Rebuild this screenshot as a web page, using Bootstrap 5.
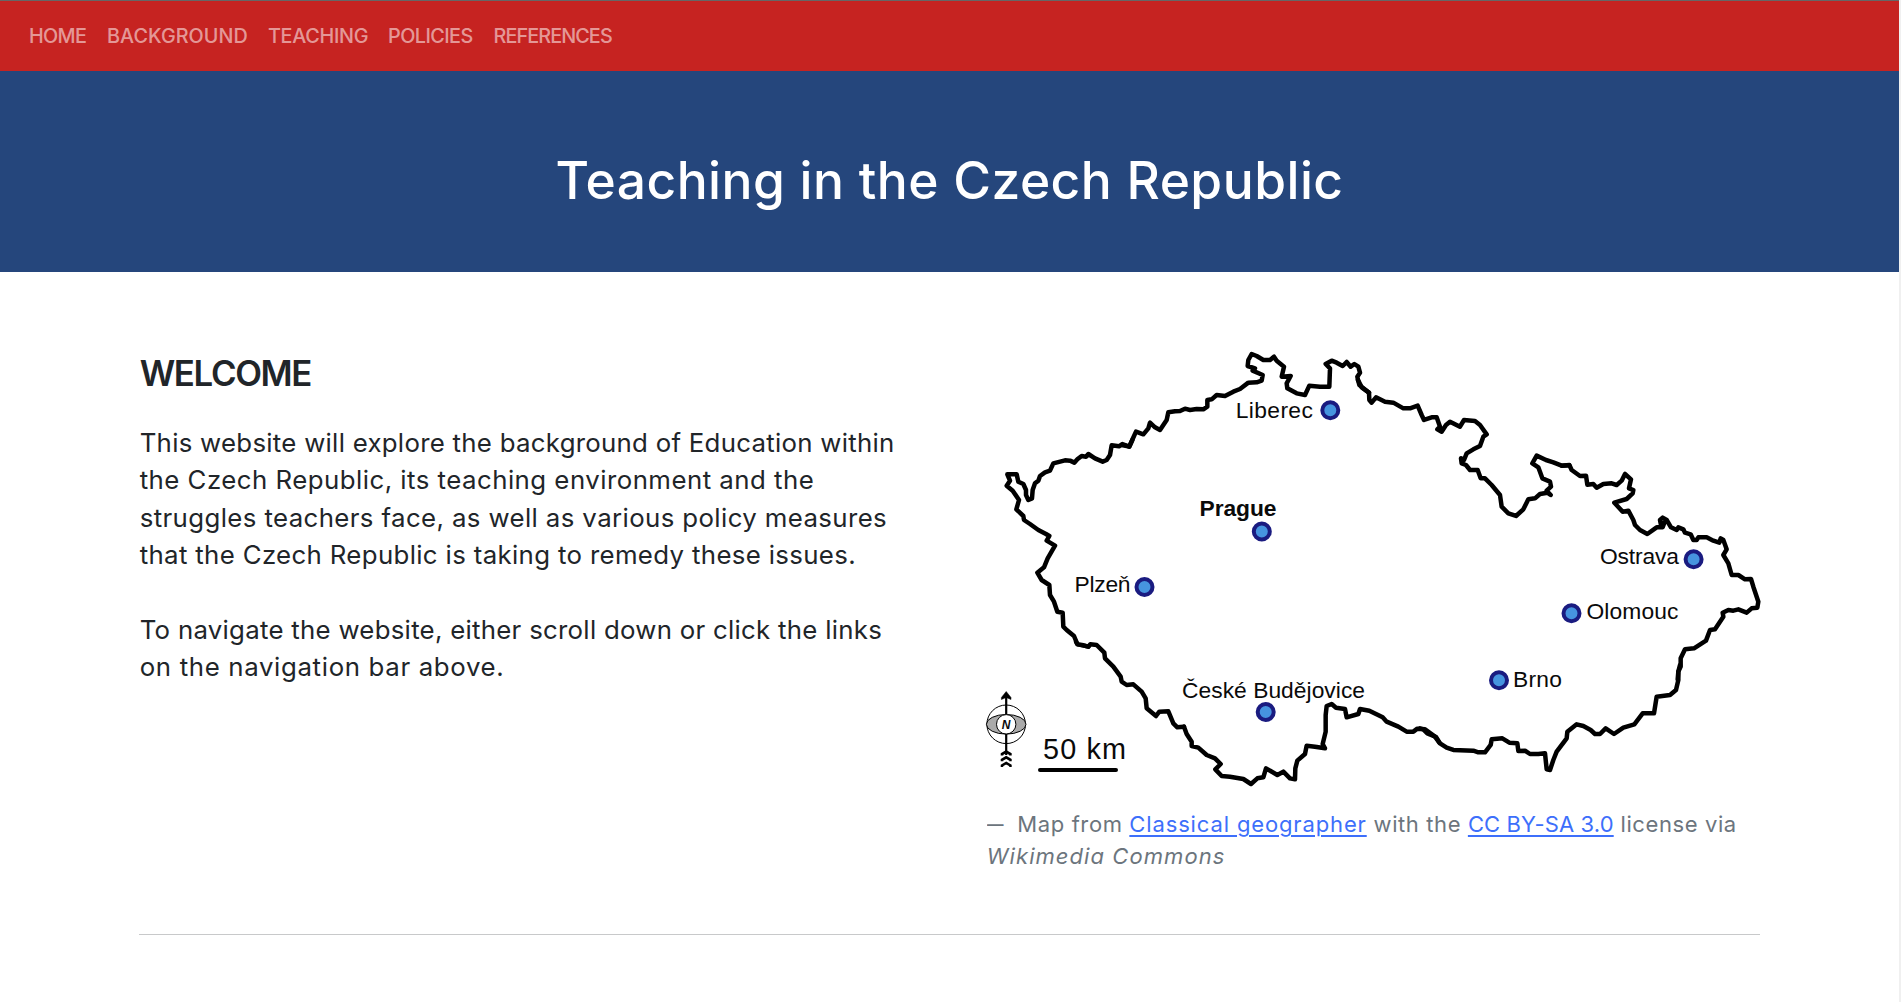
<!DOCTYPE html>
<html lang="en">
<head>
<meta charset="utf-8">
<meta name="viewport" content="width=device-width, initial-scale=1">
<title>Teaching in the Czech Republic</title>
<link href="https://cdn.jsdelivr.net/npm/bootstrap@5.3.0/dist/css/bootstrap.min.css" rel="stylesheet">
<style>
  body { font-family: Inter, "Open Sans", sans-serif; color: #212529; background: #fff; border-right: 2px solid #f0f0f0; height: 1002px; overflow: hidden; }
  .site-nav { background: #c62321; border-top: 1px solid #666; height: 71px; padding: 0 0 0 29px; align-items: center; }
  .site-nav .nav-link { font-size: 19.8px; line-height: 30px; font-weight: 500; color: rgba(255,255,255,.55); padding: 0; white-space: nowrap; }
  .w-home { width: 78px; letter-spacing: -.65px; }
  .w-back { width: 161px; letter-spacing: .05px; }
  .w-teach { width: 120px; letter-spacing: -.3px; }
  .w-pol { width: 105.5px; letter-spacing: -.55px; }
  .w-ref { letter-spacing: -.9px; }
  .hero { background: #25467c; height: 201px; padding-top: 79px; }
  .hero h1 { font-size: 51.5px; line-height: 60px; font-weight: 500; letter-spacing: .48px; color: #fff; }
  .page { margin: 0 139px; border-bottom: 1px solid #c8c9ca; height: 663px; padding-top: 73px; gap: 74px; }
  .page > div { flex: 1 1 0; min-width: 0; }
  .intro { padding: 7px 0 0 .7px; }
  .intro h2 { font-size: 34.8px; line-height: 43px; font-weight: 600; letter-spacing: -1.35px; margin-bottom: 29px; }
  .intro p { font-size: 25.8px; line-height: 37.4px; margin-bottom: 37.4px; white-space: nowrap; }
  .intro p span { display: block; }
  .s1 { letter-spacing: .28px; } .s2 { letter-spacing: .48px; } .s3 { letter-spacing: .39px; }
  .s4 { letter-spacing: .35px; } .s5 { letter-spacing: .28px; } .s6 { letter-spacing: .66px; }
  .map-art { display: block; width: 774px; height: 445px; overflow: visible; }
  .map-art text { font-family: "Liberation Sans", Arial, sans-serif; font-size: 22.8px; fill: #0a0a0a; }
  .blockquote-footer { font-size: 22px; line-height: 32px; margin: 18px 0 0; color: #6c757d; letter-spacing: .6px; white-space: nowrap; }
  .blockquote-footer::before { content: "–"; display: inline-block; width: 30.5px; transform: scaleX(1.5); transform-origin: 0 0; }
  .blockquote-footer a { color: #3d6ffb; text-decoration-thickness: 2px; text-underline-offset: 3px; }
  .c1 { letter-spacing: .86px; } .c2 { letter-spacing: .13px; } .c3 { letter-spacing: 1.06px; }
</style>
<script src="https://cdn.jsdelivr.net/npm/bootstrap@5.3.0/dist/js/bootstrap.bundle.min.js"></script>
</head>
<body>
<nav class="site-nav d-flex">
  <a class="nav-link w-home" href="#">HOME</a>
  <a class="nav-link w-back" href="#">BACKGROUND</a>
  <a class="nav-link w-teach" href="#">TEACHING</a>
  <a class="nav-link w-pol" href="#">POLICIES</a>
  <a class="nav-link w-ref" href="#">REFERENCES</a>
</nav>
<header class="hero text-center"><h1 class="m-0">Teaching in the Czech Republic</h1></header>
<main class="page d-flex">
  <div class="intro">
    <h2>WELCOME</h2>
    <p><span class="s1">This website will explore the background of Education within</span>
      <span class="s2">the Czech Republic, its teaching environment and the</span>
      <span class="s3">struggles teachers face, as well as various policy measures</span>
      <span class="s4">that the Czech Republic is taking to remedy these issues.</span></p>
    <p><span class="s5">To navigate the website, either scroll down or click the links</span>
      <span class="s6">on the navigation bar above.</span></p>
  </div>
  <div>
    <svg class="map-art" viewBox="987 345 774 445" role="img" aria-label="Map of the Czech Republic">
      <!-- national border, one stretch per polyline -->
      <g fill="none" stroke="#000" stroke-width="13.5" stroke-linejoin="round" stroke-linecap="round">
        <polyline transform="translate(970 440) scale(.33333)" points="487,0 478,20 457,12 447,19 425,16 420,45 410,60 398,65 375,55 355,42 348,50 335,48 322,58 313,68 300,62 285,61 250,70 240,92 225,97 210,108 205,122 195,130 188,150 186,175 175,180 168,165 168,150 160,132 145,125 140,103 112,103 120,122 110,137 128,152 147,180 139,208 160,228 162,240 180,252 205,270 228,282 238,288 230,302 255,317 233,355 222,382 202,398 215,420 238,435 240,465 252,485 262,515 278,518 280,560 290,570 312,588 322,612 355,620"/>
        <polyline transform="translate(970 640) scale(.33333)" points="318,5 322,13 340,16 355,20 361,13 380,15 403,38 405,55 430,80 452,110 455,125 470,135 490,133 515,155 527,175 530,205 558,228 568,215 595,214 610,250 622,262 642,260"/>
        <polyline transform="translate(1180 640) scale(.33333)" points="12,260 20,282 35,305 35,318 55,323 80,345 105,355 122,372 106,388 125,408 150,410 190,417 213,432 232,415 250,412 258,385 292,405 310,395 330,415 345,418 346,385 352,362 375,342 380,317 405,320 435,325 428,312 437,275 437,225 440,198 455,192 468,203 495,207 500,232 535,222 540,207 568,212 608,232 620,245 655,260 680,275 700,275 712,266 735,268 765,290 778,308"/>
        <polyline transform="translate(1420 600) scale(.33333)" points="0,385 10,388 22,400 48,411 60,430 80,443 100,450 160,452 175,457 195,457 212,435 215,418 247,415 268,428 292,430 295,453 315,452 330,462 355,462 375,460 380,508 390,510 400,480 410,455 440,415 442,395 470,373 490,378 512,390 525,402 540,402 557,385 582,402 610,383 643,373 668,340 702,340 710,290 750,285 768,270 775,240 775,215 780,195"/>
        <polyline transform="translate(1560 440) scale(.33333)" points="353,718 355,695 362,680 362,655 375,628 402,625 438,602 450,570 465,568 490,530 488,518 505,510 520,512 535,508 560,518 575,505 592,503 595,485 580,440 573,417 555,418 535,405 515,405 505,370 490,345 500,328 490,300 482,295 478,308 460,302 440,292 415,292 410,300 400,300 392,283 375,278 370,268 355,262 350,270 333,262 320,240 308,233 300,240 303,255 313,248 308,262 290,262 262,282 240,270 225,255 220,240 205,212 188,215 163,188 200,177 218,160 220,150 207,145 213,118 195,102 185,122 170,135 155,130 130,132 110,143 100,132 82,134 78,107 60,108 35,90 28,75 5,77"/>
        <polyline transform="translate(1360 340) scale(.33333)" points="628,376 605,377 580,367 558,360 530,347 517,370 535,382 547,415 570,425 573,440 560,452 572,465 562,458 540,462 525,475 505,478 490,508 468,528 445,520 425,500 420,465 395,435 375,415 362,415 353,390 330,390 318,375 305,370 303,355 312,360 320,340 340,328 360,318 370,290 380,283 360,255 345,243 312,240 300,260 270,245 258,255 245,275 232,268 240,260 230,232 215,232 192,240 185,225 173,197 150,205 130,205 100,188 75,185 48,172 35,188 28,180 27,158 5,142 -6,120"/>
        <polyline transform="translate(1120 340) scale(.33333)" points="747,158 718,135 714,120 712,110 720,98 715,80 703,72 692,80 680,66 668,78 650,68 635,62 617,72 630,85 628,140 600,140 568,137 555,165 530,160 502,145 500,130 512,108 485,110 492,80 470,62 462,50 450,60 430,60 410,48 395,42 385,60 383,78 405,85 398,92 428,105 425,122 410,127 385,128 360,147 340,155 315,168 290,165 275,178 262,180 262,200 250,208 230,207 210,210 195,206 180,213 165,214 145,217 140,240 120,270 105,262 90,248 85,265 70,283 48,275 38,297 28,320 5,315"/>
      </g>
      <!-- cities -->
      <g fill="#4694df" stroke="#1a1b80" stroke-width="4">
        <circle cx="1330.3" cy="410.3" r="8"/><circle cx="1261.8" cy="531.5" r="8"/><circle cx="1144.5" cy="587" r="8"/>
        <circle cx="1571.5" cy="613.3" r="8"/><circle cx="1693.6" cy="559.2" r="8"/><circle cx="1499" cy="680.3" r="8"/><circle cx="1265.7" cy="712" r="8"/>
      </g>
      <text x="1235.8" y="418.3" textLength="77">Liberec</text>
      <text x="1199.5" y="515.5" textLength="77" font-weight="700">Prague</text>
      <text x="1182" y="698.3" textLength="183">České Budějovice</text>
      <text x="1074.5" y="592" textLength="56">Plzeň</text>
      <text x="1586.5" y="619" textLength="92">Olomouc</text>
      <text x="1600" y="564.3" textLength="79">Ostrava</text>
      <text x="1513" y="687" textLength="49">Brno</text>
      <text x="1043" y="759.3" textLength="83" style="font-size:28.8px">50 km</text>
      <path d="M1040 770H1116" stroke="#000" stroke-width="4" stroke-linecap="round"/>
      <!-- compass -->
      <g fill="none" stroke="#000">
        <circle cx="1006.2" cy="724.3" r="19.3" fill="#fff" stroke-width="1"/>
        <path d="M1006.2 694V715M1006.2 733V755" stroke-width="2.2"/>
        <ellipse cx="1006.2" cy="724.3" rx="19.8" ry="9.8" fill="#aaa" stroke-width="1"/>
        <circle cx="1006.2" cy="724.3" r="9.7" fill="#fff" stroke-width="1"/>
        <path d="M1002 767v-1.500l4.200-2.500 4.200 2.500v1.500M1002 761.300v-1.500l4.200-2.500 4.200 2.500v1.500M1002 755.600v-1.500l4.200-2.500 4.200 2.500v1.500" stroke-width="2.600"/>
        <path d="M1006.2 691.500l4.800 6v2l-4.800-2-4.800 2v-2z" fill="#000" stroke-width=".5"/>
      </g>
      <text x="1001.8" y="728.600" font-weight="700" font-style="italic" style="font-size:12px">N</text>
    </svg>
    <div class="blockquote-footer">Map from <a class="c1" href="#">Classical geographer</a> with the <a class="c2" href="#">CC BY-SA 3.0</a> license via<br><cite class="c3">Wikimedia Commons</cite></div>
  </div>
</main>
</body>
</html>
